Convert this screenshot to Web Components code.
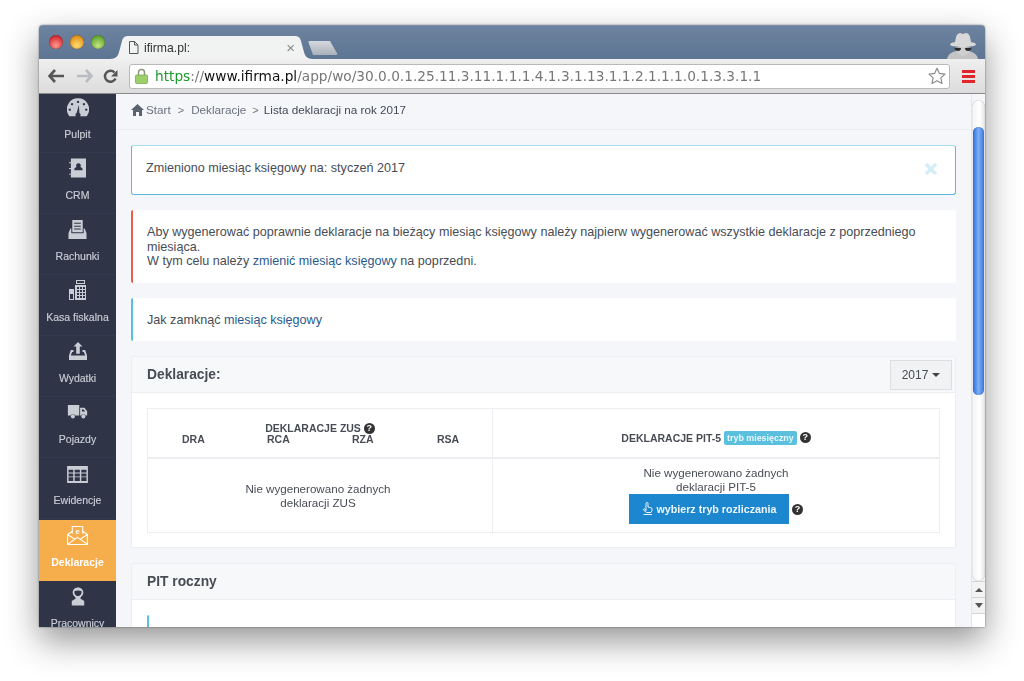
<!DOCTYPE html>
<html lang="pl">
<head>
<meta charset="utf-8">
<title>ifirma.pl</title>
<style>
  html, body { margin: 0; background: #fff; }
  body { padding: 25px 39px 0; height: 681px; box-sizing: border-box; overflow: hidden; font-family: "Liberation Sans", Arial, sans-serif; }
  a { color: #2a5a8c; text-decoration: none; }
</style>
</head>
<body>

<template id="browser-window-template">
  <style>
    :host { display: flex; flex-direction: column; height: 602px; border-radius: 4px 4px 0 0; overflow: hidden; filter: blur(.3px);
      box-shadow: 0 0 2px rgba(0,0,0,.55), 0 14px 34px rgba(0,0,0,.42); }
    .page { flex: 1; min-height: 0; display: flex; }
    ::slotted([slot=main]) { flex: 1; min-width: 0; }
  </style>
  <slot name="chrome"></slot>
  <div class="page">
    <slot name="nav"></slot>
    <slot name="main"></slot>
    <slot name="scroll"></slot>
  </div>
</template>

<template id="browser-tabs-template">
  <style>
    :host { display: flex; height: 34px; position: relative; background: linear-gradient(#6d83a0, #5d7593); border-top: 1px solid #7d90aa; box-sizing: border-box; }
    .lights { display: flex; gap: 7px; padding: 9px 0 0 10px; }
    .lights i { width: 14px; height: 14px; border-radius: 50%; box-shadow: inset 0 0 1px rgba(0,0,0,.6); }
    .r { background: radial-gradient(circle at 50% 75%, #ff9a8d, #d8343a 65%, #a9202a); }
    .y { background: radial-gradient(circle at 50% 75%, #ffdc73, #e49a22 65%, #b87414); }
    .g { background: radial-gradient(circle at 50% 75%, #c5e67f, #6bab38 65%, #4d8526); }
    .tab { margin: 10px 0 0 5px; width: 203px; height: 23px; background: #f1f2f2; display: flex; align-items: center; box-sizing: border-box; padding: 0 18px 0 18px; font: 12.2px "Liberation Sans", sans-serif; color: #333;
      clip-path: path("M0 23 C6 23 8 20 9 16 L12 5 C13 1 15 0 19 0 L184 0 C188 0 190 1 191 5 L194 16 C195 20 197 23 203 23 Z"); }
    .tab svg { margin-right: 5px; }
    .tab span { flex: 1; padding-top: 1px; }
    .tab b { color: #888; font: 15px "Liberation Sans", sans-serif; }
    .newtab { margin: 15px 0 0 -5px; width: 30px; height: 14px; background: linear-gradient(#d5d9de, #aab1ba); clip-path: polygon(0 0, 22px 0, 30px 100%, 5px 100%); border-radius: 2px; }
    .spy { position: absolute; right: 6px; bottom: 0; }
  </style>
  <div class="lights"><i class="r"></i><i class="y"></i><i class="g"></i></div>
  <div class="tab">
    <svg width="11" height="13" viewBox="0 0 11 13" fill="none" stroke="#555" stroke-width="1"><path d="M1.5.5h5l3.5 3.5v8.500h-8.500z M6.500.5v3.500h3.500"/></svg>
    <span><slot></slot></span>
    <b>×</b>
  </div>
  <div class="newtab"></div>
  <svg class="spy" width="33" height="27" viewBox="0 0 33 27">
    <path d="M1 27c1-5 5-7 9-8l13 0c4 1 8 3 9 8z" fill="#c4c4c4"/>
    <path d="M10 5c1-3 3-4 4-4l3 1 3-1c2 0 3 1 4 4l1 5c3 .5 5 1.500 5 2.500 0 1.500-6 2.500-13 2.500S4 14 4 12.500c0-1 2-2 5-2.500z" fill="#d8d8d8"/>
    <path d="M9 15c1 6 5 9 8 9s7-3 8-9z" fill="#cfcfcf"/>
    <path d="M8.500 15.500l6.500.5c0 2-1 3-3.200 3S8.500 17.500 8.500 15.500zM25.500 15.500L19 16c0 2 1 3 3.200 3s3.300-1.500 3.300-3.500z" fill="#2b2b2b"/>
  </svg>
</template>

<template id="browser-bar-template">
  <style>
    :host { display: flex; align-items: center; height: 35px; box-sizing: border-box; background: linear-gradient(#efefef, #dcdcdc); border-bottom: 1px solid #8a8a8a; }
    .btns { display: flex; width: 90px; padding-left: 9px; box-sizing: border-box; gap: 13px; align-items: center; }
    .btns svg:last-child { margin-left: -3px; }
    .omni { width: 821px; height: 25px; background: #fff; border: 1px solid #b9b9b9; border-radius: 3px; box-sizing: border-box; display: flex; align-items: center; padding: 0 3px 0 5px;
      font: 13.7px "DejaVu Sans", sans-serif; color: #777; white-space: nowrap; }
    .omni svg:first-child { margin-right: 7px; }
    .url { flex: 1; }
    .url em { font-style: normal; color: #1f9a2d; }
    .url b { font-weight: normal; color: #111; }
    .menu { margin-left: 12px; width: 13px; height: 13px; display: flex; flex-direction: column; justify-content: space-between; }
    .menu i { height: 3px; background: #e0262a; }
  </style>
  <div class="btns">
    <svg width="16" height="14" viewBox="0 0 16 14"><path d="M7 1L1.500 7 7 13M2 7h14" fill="none" stroke="#555" stroke-width="2.600"/></svg>
    <svg width="16" height="14" viewBox="0 0 16 14"><path d="M9 1l5.500 6L9 13M14 7H0" fill="none" stroke="#b9bcc0" stroke-width="2.600"/></svg>
    <svg width="15" height="15" viewBox="0 0 15 15"><path d="M12.500 9.500A5.500 5.500 0 1 1 11.500 3.500" fill="none" stroke="#555" stroke-width="2.500"/><path d="M14.500 1v6.500H8z" fill="#555"/></svg>
  </div>
  <div class="omni">
    <svg width="13" height="16" viewBox="0 0 13 16"><path d="M3.500 7V4.500a3 3 0 0 1 6 0V7" fill="none" stroke="#8e9a7f" stroke-width="1.500"/><rect x=".5" y="7" width="12" height="8.500" rx="1" fill="#9ccf6a" stroke="#7fa858" stroke-width=".8"/></svg>
    <span class="url"><em>https</em>://<b>www.ifirma.pl</b>/app/wo/30.0.0.1.25.11.3.11.1.1.1.4.1.3.1.13.1.1.2.1.1.1.0.1.3.3.1.1</span>
    <svg width="18" height="18" viewBox="0 0 18 18"><path d="M9 1.200l2.400 5.200 5.600.7-4.100 3.800 1.100 5.600L9 13.700l-5 2.800 1.100-5.600L1 7.100l5.600-.7z" fill="#fff" stroke="#8d8d8d" stroke-width="1.200" stroke-linejoin="round"/></svg>
  </div>
  <div class="menu"><i></i><i></i><i></i></div>
</template>

<template id="side-nav-template">
  <style>
    :host { display: flex; flex-direction: column; width: 77px; flex: none; background: #2f3547; overflow: hidden; }
    ::slotted(:first-child) { margin-top: -2px; }
  </style>
  <slot></slot>
</template>

<template id="nav-item-template">
  <style>
    :host { display: flex; flex: none; flex-direction: column; align-items: center; height: 61px; box-sizing: border-box; color: #c9ced6; border-bottom: 1px solid #353b4e; position: relative; font: 10.5px/12px "Liberation Sans", sans-serif; -webkit-text-stroke: .15px currentColor; }
    :host([active]) { background: #f5ae4b; color: #fff; border-bottom-color: #f5ae4b; font-weight: bold; -webkit-text-stroke: 0; margin-top: 1px; }
    .ico { height: 20px; margin-top: 5px; display: flex; align-items: flex-end; }
    .lbl { margin-top: 11px; white-space: nowrap; }
  </style>
  <div class="ico"><slot></slot></div>
  <div class="lbl" id="l"></div>
</template>

<template id="crumb-bar-template">
  <style>
    :host { display: flex; flex: none; align-items: center; height: 36px; box-sizing: border-box; border-bottom: 1px solid #eceef2; padding: 0 0 4px 15px; font: 11.7px "Liberation Sans", sans-serif; color: #6b7180; }
    .sep { margin: 0 7px 0 7px; font-size: 11px; color: #777; }
    .sep.b { margin: 0 5px 0 6px; }
    .now { color: #444a58; }
    svg { margin-right: 2px; }
  </style>
  <svg width="13" height="12" viewBox="0 0 13 12"><path d="M6.500 0L0 6h2v6h3V8h3v4h3V6h2z" fill="#5c6270"/></svg>
  <span>Start</span><span class="sep">&gt;</span><span>Deklaracje</span><span class="sep b">&gt;</span><span class="now"><slot></slot></span>
</template>

<template id="alert-box-template">
  <style>
    :host { display: block; box-sizing: border-box; background: #fff; border-left: 2px solid #5bc0de; border-radius: 2px; padding: 15px 14px; height: 43px; font: 12.6px/14.500px "Liberation Sans", sans-serif; color: #484c55; position: relative; }
    :host([kind=danger]) { border-left-color: #e8604c; height: 73px; }
    :host([kind=flash]) { border: 1px solid #5bb9dc; border-top-color: #a7dcef; padding: 15px 14px; height: 50px; border-radius: 3px; }
    .x { display: none; position: absolute; right: 17px; top: 16px; }
    :host([kind=flash]) .x { display: block; }
  </style>
  <slot></slot>
  <svg class="x" width="14" height="14" viewBox="0 0 14 14"><path d="M2 2l10 10M12 2L2 12" stroke="#d4edf6" stroke-width="3.500"/></svg>
</template>

<template id="panel-card-template">
  <style>
    :host { display: block; background: #fff; border: 1px solid #eceef2; border-radius: 2px; }
    header { display: flex; align-items: center; justify-content: space-between; height: 36px; box-sizing: border-box; background: #f7f8fa; border-bottom: 1px solid #eceef2; padding: 0 3px 0 15px; font: bold 13.8px "Liberation Sans", sans-serif; color: #484c55; }
    .body { padding: 15px 15px 14px; }
  </style>
  <header><span id="t"></span><slot name="tools"></slot></header>
  <div class="body"><slot></slot></div>
</template>

<template id="year-button-template">
  <style>
    :host { display: inline-flex; align-items: center; justify-content: center; gap: 4px; width: 62px; height: 30px; box-sizing: border-box; background: #f1f2f3; border: 1px solid #dcdee1; font: 12px "Liberation Sans", sans-serif; color: #484c55; }
    i { border: 4px solid transparent; border-top-color: #444; border-bottom: 0; }
  </style>
  <slot></slot><i></i>
</template>

<template id="help-mark-template">
  <style>
    :host { display: inline-flex; align-items: center; justify-content: center; width: 11px; height: 11px; border-radius: 50%; background: #333; color: #fff; font: bold 9px/11px "Liberation Sans", sans-serif; vertical-align: 1px; }
  </style>
  ?
</template>

<template id="decl-table-template">
  <style>
    :host { display: grid; grid-template-columns: 345px 1fr; grid-template-rows: 50px 75px; border: 1px solid #eceef2; font: 11.6px/14px "Liberation Sans", sans-serif; color: #484c55; text-align: center; box-sizing: border-box; height: 125px; }
    ::slotted(*) { box-sizing: border-box; }
    ::slotted([slot=h1]), ::slotted([slot=h2]) { border-bottom: 2px solid #eceef2; }
    ::slotted([slot=h1]), ::slotted([slot=c1]) { border-right: 1px solid #eceef2; }
  </style>
  <slot name="h1"></slot><slot name="h2"></slot><slot name="c1"></slot><slot name="c2"></slot>
</template>

<template id="page-scroll-template">
  <style>
    :host { display: flex; flex-direction: column; width: 14px; flex: none; background: #f5f6f9; border-left: 1px solid #e4e5e8; box-sizing: border-box; position: relative; }
    .track { position: relative; height: 481px; margin-top: 6px; }
    .thumb { position: absolute; left: 0; right: 0; top: 0; bottom: 0; border-radius: 7px; background: linear-gradient(90deg, #f3f3f3, #fff 60%, #e4e4e4); box-shadow: inset 0 0 1px #999; }
    .blue { position: absolute; left: 1px; right: 1px; top: 27px; height: 268px; border-radius: 6px; background: linear-gradient(90deg, #2e6ee0, #7cb0f4 50%, #3a78e4); box-shadow: inset 0 0 1px #1f4fae; }
    .arrow { height: 15px; background: #f3f3f3; border-top: 1px solid #d4d4d4; display: flex; align-items: center; justify-content: center; }
    .arrow i { border: 4px solid transparent; border-bottom-color: #555; border-top: 0; }
    .arrow.d i { border-top: 5px solid #555; border-bottom: 0; }
    .rest { flex: 1; background: #fff; border-top: 1px solid #d4d4d4; }
  </style>
  <div class="track"><div class="thumb"></div><div class="blue"></div></div>
  <div class="arrow"><i></i></div>
  <div class="arrow d"><i></i></div>
  <div class="rest"></div>
</template>

<browser-window>
  <browser-tabs slot="chrome">ifirma.pl:</browser-tabs>
  <browser-bar slot="chrome"></browser-bar>

  <side-nav slot="nav">
    <nav-item label="Pulpit"><svg width="22" height="19" viewBox="0 0 24 20" fill="#c9ced6"><path fill-rule="evenodd" d="M12 0a12 12 0 0 1 10.500 18l-1 1.500h-7.200a2.500 2.500 0 0 0-.8-3.500L13 7l-2.500 9a2.500 2.500 0 0 0-.8 3.500H2.500l-1-1.500A12 12 0 0 1 12 0zM12 2.500a1.300 1.300 0 1 0 .01 0zM5.500 5a1.300 1.300 0 1 0 .01 0zM18.500 5a1.300 1.300 0 1 0 .01 0zM3 11a1.300 1.300 0 1 0 .01 0zM21 11a1.300 1.300 0 1 0 .01 0z"/></svg></nav-item>
    <nav-item label="CRM"><svg width="17" height="20" viewBox="0 0 18 20" fill="#c9ced6"><path fill-rule="evenodd" d="M2 0h16v20H2v-3H0v-1h2v-5H0v-1h2V5H0V4h2zM10 5a2.500 2.500 0 0 0-2 4c-1.500.5-2.500 1.500-2.500 3.500h9C14.500 10.500 13.500 9.500 12 9a2.500 2.500 0 0 0-2-4z"/></svg></nav-item>
    <nav-item label="Rachunki"><svg width="19" height="19" viewBox="0 0 19 20" fill="#c9ced6"><path fill-rule="evenodd" d="M4 0h11v13H4zM6 3v1h7V3zM6 6v1h7V6zM6 9v1h7V9z"/><path d="M2 9h1v5h13V9h1l2 5v6H0v-6z"/></svg></nav-item>
    <nav-item label="Kasa fiskalna"><svg width="17" height="20" viewBox="0 0 17 20" fill="#c9ced6"><path fill-rule="evenodd" d="M7 0h9v4H7zM8 1v2h7V1z"/><path fill-rule="evenodd" d="M6 5h11v15H6zM8 7v2h2V7zM11 7v2h2V7zM14 7v2h2V7zM8 10v2h2v-2zM11 10v2h2v-2zM14 10v2h2v-2zM8 13v2h2v-2zM11 13v2h2v-2zM14 13v2h2v-2zM8 16v2h2v-2zM11 16v2h2v-2zM14 16v2h2v-2z"/><path fill-rule="evenodd" d="M0 9h5v11H0zM1 14v5h3v-5z"/></svg></nav-item>
    <nav-item label="Wydatki"><svg width="18" height="18" viewBox="0 0 20 20" fill="#c9ced6" style="margin-bottom:1px"><path d="M10 0l5 5h-3v8H8V5H5z"/><path d="M2 9h3v2H3.500L2 15h16l-1.500-4H15V9h3l2 6v5H0v-5z"/></svg></nav-item>
    <nav-item label="Pojazdy"><svg width="21" height="14" viewBox="0 0 22 16" fill="#c9ced6" style="margin-bottom:3px"><path fill-rule="evenodd" d="M0 0h13v12H8.500a3 3 0 0 0-5.500 0H0zM14 3h5l3 4v5h-1.500a3 3 0 0 0-5.500 0h-1zM16 5v2.500h4L18 5z"/><circle cx="5.700" cy="13" r="2.300"/><circle cx="17.700" cy="13" r="2.300"/></svg></nav-item>
    <nav-item label="Ewidencje"><svg width="21" height="17" viewBox="0 0 22 18" fill="#c9ced6"><path fill-rule="evenodd" d="M0 0h22v18H0zM1.500 4v3h5V4zM8 4v3h5.500V4zM15 4v3h5.500V4zM1.500 8v3h5V8zM8 8v3h5.500V8zM15 8v3h5.500V8zM1.500 12v4h5v-4zM8 12v4h5.500v-4zM15 12v4h5.500v-4z"/></svg></nav-item>
    <nav-item label="Deklaracje" active><svg width="21" height="19" viewBox="0 0 22 20" fill="none" stroke="#fff" stroke-width="1.100"><path d="M5.500 8V.6h11V8M5.500 5.500L.6 9v10.400h20.800V9l-4.900-3.500M.6 9L8 14M21.400 9L14 14M.6 19.400L11 12l10.400 7.400"/><text x="11" y="8" text-anchor="middle" font-family="Liberation Sans" font-size="8" fill="#fff" stroke="none">e</text></svg></nav-item>
    <nav-item label="Pracownicy"><svg width="16" height="19" viewBox="0 0 18 20" fill="#c9ced6"><path fill-rule="evenodd" d="M9 0c3.500 0 6 2.500 6 5.500 0 2-1 3.700-2.500 4.700l-1 2L16 15v5H2v-5l4.500-2.800-1-2C4 9.200 3 7.500 3 5.500 3 2.500 5.500 0 9 0zM5 4c-.3 3 1.500 5.500 4 5.500S13.300 7 13 4C11 3 7 3 5 4z"/></svg></nav-item>
  </side-nav>

  <page-main slot="main">
    <crumb-bar>Lista deklaracji na rok 2017</crumb-bar>
    <page-stack>
      <alert-box kind="flash">Zmieniono miesiąc księgowy na: styczeń 2017</alert-box>
      <alert-box kind="danger">Aby wygenerować poprawnie deklaracje na bieżący miesiąc księgowy należy najpierw wygenerować wszystkie deklaracje z poprzedniego miesiąca.<br>W tym celu należy <a href="#">zmienić miesiąc księgowy</a> na poprzedni.</alert-box>
      <alert-box>Jak zamknąć <a href="#">miesiąc księgowy</a></alert-box>
      <panel-card heading="Deklaracje:">
        <year-button slot="tools">2017</year-button>
        <decl-table>
          <zus-head slot="h1"></zus-head>
          <pit-head slot="h2"></pit-head>
          <empty-cell slot="c1">Nie wygenerowano żadnych<br>deklaracji ZUS</empty-cell>
          <pit-cell slot="c2"></pit-cell>
        </decl-table>
      </panel-card>
      <panel-card heading="PIT roczny"><alert-box></alert-box></panel-card>
    </page-stack>
  </page-main>

  <page-scroll slot="scroll"></page-scroll>
</browser-window>

<script>
  const mount = (el, id) => el.attachShadow({ mode: 'open' }).appendChild(document.getElementById(id).content.cloneNode(true));

  // elements that are just their template
  const plain = {
    'browser-window': 'browser-window-template',
    'browser-tabs': 'browser-tabs-template',
    'browser-bar': 'browser-bar-template',
    'side-nav': 'side-nav-template',
    'crumb-bar': 'crumb-bar-template',
    'alert-box': 'alert-box-template',
    'year-button': 'year-button-template',
    'help-mark': 'help-mark-template',
    'decl-table': 'decl-table-template',
    'page-scroll': 'page-scroll-template',
  };
  for (const [name, id] of Object.entries(plain)) {
    customElements.define(name, class extends HTMLElement {
      constructor() { super(); mount(this, id); }
    });
  }

  customElements.define('nav-item', class extends HTMLElement {
    constructor() { super(); mount(this, 'nav-item-template'); }
    connectedCallback() { this.shadowRoot.getElementById('l').textContent = this.getAttribute('label'); }
  });

  customElements.define('panel-card', class extends HTMLElement {
    constructor() { super(); mount(this, 'panel-card-template'); }
    connectedCallback() { this.shadowRoot.getElementById('t').textContent = this.getAttribute('heading'); }
  });

  // small ones, markup set in the class
  const inline = (name, html) => customElements.define(name, class extends HTMLElement {
    constructor() { super(); this.attachShadow({ mode: 'open' }).innerHTML = html; }
  });

  inline('page-main', `<style>:host { display: flex; flex-direction: column; background: #f5f6f9; overflow: hidden; }</style><slot></slot>`);
  inline('page-stack', `<style>:host { display: flex; flex-direction: column; gap: 15px; padding: 15px 15px 0; width: 855px; box-sizing: border-box; }
    ::slotted(*) { flex: none; }</style><slot></slot>`);

  inline('zus-head', `<style>:host { display: block; font: bold 10.5px/11px "Liberation Sans", sans-serif; padding-top: 14px; }
    .row { display: grid; grid-template-columns: repeat(3, 85px) 1fr; margin-left: 34px; text-align: left; }
    </style><div>DEKLARACJE ZUS <help-mark></help-mark></div>
    <div class="row"><span>DRA</span><span>RCA</span><span>RZA</span><span>RSA</span></div>`);

  inline('pit-head', `<style>:host { display: flex; align-items: center; justify-content: center; gap: 3px; font: bold 10.5px "Liberation Sans", sans-serif; padding-top: 9px; }
    .badge { background: #5bc0de; color: #e9f7fb; font: bold 8.9px/14px "Liberation Sans", sans-serif; padding: 0 3px; border-radius: 2px; }
    </style><span>DEKLARACJE PIT-5</span><span class="badge">tryb miesięczny</span><help-mark></help-mark>`);

  inline('empty-cell', `<style>:host { display: flex; align-items: center; justify-content: center; padding: 0 4px 2px 0; font: 11.6px/14px "Liberation Sans", sans-serif; color: #484c55; }</style><div><slot></slot></div>`);

  inline('pit-cell', `<style>:host { display: flex; flex-direction: column; align-items: center; padding-top: 7px; font: 11.6px/14px "Liberation Sans", sans-serif; color: #484c55; }
    .row { display: flex; align-items: center; gap: 3px; }
    button { all: unset; display: flex; align-items: center; justify-content: center; gap: 4px; width: 160px; height: 30px; background: #1c86cf; color: #eef6fb; font: bold 10.7px "Liberation Sans", sans-serif; }
    </style><div>Nie wygenerowano żadnych<br>deklaracji PIT-5</div>
    <div class="row"><button><svg width="11" height="14" viewBox="0 0 11 14" fill="none" stroke="#fff" stroke-width=".9"><path d="M4 9V1.500a1 1 0 0 1 2 0V5l3 .8a1 1 0 0 1 1 1V8.500L9 10.500H4.500L1.500 8a.8.8 0 0 1 1.200-1L4 8M1.500 12.500h8.500"/></svg>wybierz tryb rozliczania</button><help-mark></help-mark></div>`);
</script>
</body>
</html>
